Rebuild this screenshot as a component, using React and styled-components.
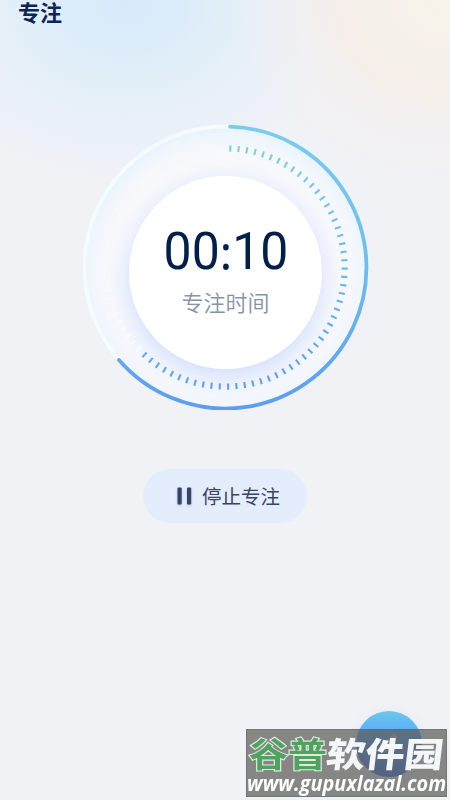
import React from 'react';
import styled, { createGlobalStyle } from 'styled-components';

const GlobalStyle = createGlobalStyle`
  *, *::before, *::after { box-sizing: border-box; }
  html, body { margin: 0; padding: 0; }
  body {
    font-family: "Noto Sans", "Noto Sans CJK SC", sans-serif;
    background: #f1f2f6;
  }
`;

const Screen = styled.main`
  position: relative;
  width: 450px;
  height: 800px;
  overflow: hidden;
  display: flex;
  flex-direction: column;
  align-items: center;
  background:
    radial-gradient(ellipse 215px 190px at 445px 0, #f7f3e9 0%, #f6f0ea 32%, rgba(246, 238, 233, 0.85) 50%, rgba(244, 239, 238, 0.5) 72%, rgba(241, 242, 246, 0) 100%),
    radial-gradient(ellipse 225px 182px at 125px 0, #d9e9f9 0%, #dcebf9 25%, #e0eff8 42%, rgba(227, 239, 248, 0.95) 52%, rgba(231, 240, 248, 0.85) 66%, rgba(236, 240, 249, 0.7) 86%, rgba(241, 242, 246, 0) 100%),
    #f1f2f6;
`;

const Header = styled.header`
  align-self: stretch;
  height: 24px;
  padding-left: 18px;
`;

const Title = styled.h1`
  margin: 0;
  font: 700 22px/22px "Noto Sans CJK SC", sans-serif;
  color: #0c2555;
`;

const Timer = styled.section`
  display: grid;
  place-items: center;
  width: 286px;
  height: 286px;
  margin: 100px 0 0 1px;
  border-radius: 50%;
  background: #f8f9fc;
  box-shadow: inset 0 6px 26px rgba(212, 236, 255, 0.75);
  & > * { grid-area: 1 / 1; }
`;

const Dial = styled.svg`
  display: block;
  z-index: 2;
`;

const Face = styled.div`
  width: 193px;
  height: 193px;
  margin-top: 11px;
  border-radius: 50%;
  background: #fff;
  box-shadow: 0 8px 26px rgba(178, 202, 255, 0.6);
  display: flex;
  flex-direction: column;
  align-items: center;
  padding-top: 45px;
  z-index: 1;
`;

const Time = styled.div`
  display: flex;
  font: 400 52px/62px Roboto, sans-serif;
  color: #00204b;
  transform: scaleX(0.96);
`;

const Colon = styled.span`
  width: 13px;
  text-align: center;
  font-family: "Noto Sans", sans-serif;
  font-size: 48px;
`;

const Caption = styled.div`
  margin-top: 2px;
  font: 350 22px/32px "Noto Sans CJK SC", sans-serif;
  color: #8593a9;
`;

const StopButton = styled.button`
  display: flex;
  align-items: center;
  justify-content: center;
  gap: 10px;
  width: 164px;
  height: 54px;
  margin-top: 59px;
  padding: 0 0 1px 7px;
  border: 0;
  border-radius: 27px;
  background: #e3edfc;
  color: #3b4268;
  font: 400 19.5px/28px "Noto Sans CJK SC", sans-serif;
`;

const PauseIcon = styled.svg`
  display: block;
  filter: drop-shadow(0 1px 1px rgba(59, 66, 104, 0.3));
`;

const EditButton = styled.button`
  position: absolute;
  left: 356px;
  top: 711px;
  width: 66px;
  height: 66px;
  padding: 0;
  border: 0;
  border-radius: 50%;
  display: grid;
  place-items: center;
  background: linear-gradient(#6bc6ee 0%, #60aff5 30%, #4a7bf0 100%);
  box-shadow: 0 3px 6px 5px rgba(226, 233, 248, 0.6);
`;

const Watermark = styled.aside`
  position: absolute;
  left: 246px;
  top: 729px;
  width: 201px;
  height: 68px;
  border: 1px solid rgba(105, 105, 105, 0.6);
  background: rgba(88, 88, 86, 0.7);
  color: #fff;
`;

const Brand = styled.div`
  display: flex;
  height: 42px;
  padding-left: 2px;
  font: 900 39px/45px "Noto Sans CJK SC", sans-serif;
  transform: scaleY(0.88);
  transform-origin: 0 60%;
`;

const BrandMark = styled.span`
  color: #4fa35e;
  font-weight: 700;
  -webkit-text-stroke: 2.4px #dfeae1;
  paint-order: stroke fill;
`;

const BrandName = styled.span`
  color: #f5f6f8;
  transform: skewX(-6deg);
`;

const Address = styled.div`
  width: max-content;
  font: italic 700 20.5px/22px "Open Sans", sans-serif;
  white-space: nowrap;
  transform: scaleX(0.97);
  transform-origin: 0 0;
`;

const ticks = Array.from({ length: 72 }, (_, i) => ({ angle: 2.3 + i * 4.01, done: i < 56 }));

function DialDrawing() {
  return (
    <Dial width="286" height="286" viewBox="0 0 286 286">
      <defs>
        <linearGradient id="arc" x1="0" y1="0" x2="0" y2="286" gradientUnits="userSpaceOnUse">
          <stop offset="0" stopColor="#7acdea" />
          <stop offset="0.5" stopColor="#70bcf0" />
          <stop offset="1" stopColor="#5b9df1" />
        </linearGradient>
      </defs>
      <circle cx="142.5" cy="143.5" r="141" fill="none" stroke="#f5fbfe" strokeWidth="3.8" />
      <path d="M147 2.6A141 141 0 1 1 36 236" fill="none" stroke="url(#arc)" strokeWidth="3.8" strokeLinecap="round" />
      {ticks.map(({ angle, done }) => {
        const a = (angle * Math.PI) / 180;
        const x = Math.sin(a);
        const y = -Math.cos(a);
        const t = (y + 1) / 2;
        const color = `rgb(${122 - 28 * t}, ${207 - 45 * t}, ${234 + 7 * t})`;
        return (
          <line
            key={angle}
            x1={142.5 + x * 116} y1={143.5 + y * 116}
            x2={142.5 + x * 122.2} y2={143.5 + y * 122.2}
            stroke={done ? color : '#fbfdff'}
            strokeWidth="2.1"
            opacity={done ? 1 : Math.max(0, 0.85 - (angle - 226) / 80)}
          />
        );
      })}
    </Dial>
  );
}

export default function App() {
  return (
    <>
      <GlobalStyle />
      <Screen>
        <Header><Title>专注</Title></Header>
        <Timer>
          <DialDrawing />
          <Face>
            <Time><span>00</span><Colon>:</Colon><span>10</span></Time>
            <Caption>专注时间</Caption>
          </Face>
        </Timer>
        <StopButton>
          <PauseIcon width="15" height="18" viewBox="0 0 15 18" fill="currentColor">
            <rect x="0.5" y="0.5" width="4.2" height="17" rx="1" />
            <rect x="10" y="0.5" width="4.2" height="17" rx="1" />
          </PauseIcon>
          停止专注
        </StopButton>
        <EditButton aria-label="edit">
          <svg width="30" height="30" viewBox="0 0 30 30">
            <path d="M4 22L14 10l5 5-8 8H4zM16 8l4-4 4 4-4 4z" fill="#f0cda8" opacity="0.65" />
          </svg>
        </EditButton>
        <Watermark>
          <Brand><BrandMark>谷普</BrandMark><BrandName>软件园</BrandName></Brand>
          <Address>www.gupuxlazal.com</Address>
        </Watermark>
      </Screen>
    </>
  );
}
